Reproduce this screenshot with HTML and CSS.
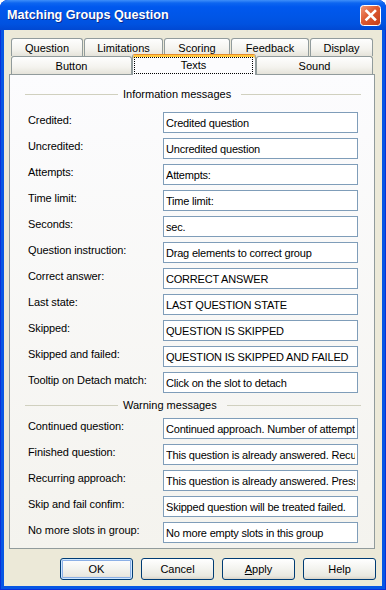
FILE: index.html
```html
<!DOCTYPE html>
<html lang="en">
<head>
  <meta charset="UTF-8">
  <title>Matching Groups Question</title>
  <link rel="stylesheet" href="styles.css">
</head>
<body>
  <div class="window">
    <!-- Title bar -->
    <div class="titlebar">
      <span class="title">Matching Groups Question</span>
      <span class="close">
        <svg width="21" height="21" viewBox="0 0 21 21">
          <defs>
            <linearGradient id="closeFill" x1="0" y1="0" x2="1" y2="1">
              <stop offset="0" stop-color="#f29b7c"/>
              <stop offset="0.45" stop-color="#de5a30"/>
              <stop offset="1" stop-color="#c13c18"/>
            </linearGradient>
          </defs>
          <rect x="0.5" y="0.5" width="20" height="20" rx="3" fill="url(#closeFill)" stroke="#fff"/>
          <path d="M6.5 6 L15 14.5 M15 6 L6.5 14.5" stroke="#fff" stroke-width="2.6" stroke-linecap="square"/>
        </svg>
      </span>
    </div>

    <div class="client">
      <!-- Tabs -->
      <div class="tabs">
        <div class="tab-row">
          <div class="tab t-question">Question</div>
          <div class="tab t-limits">Limitations</div>
          <div class="tab t-scoring">Scoring</div>
          <div class="tab t-feedback">Feedback</div>
          <div class="tab t-display">Display</div>
        </div>
        <div class="tab-row lower">
          <div class="tab t-button">Button</div>
          <div class="tab selected t-texts"><span class="focus">Texts</span></div>
          <div class="tab t-sound">Sound</div>
        </div>
      </div>

      <div class="panel">
        <div class="group-head">
          <span class="line short"></span>
          <span class="caption">Information messages</span>
          <span class="line"></span>
        </div>
        <div class="row"><label>Credited:</label><input type="text" value="Credited question"></div>
        <div class="row"><label>Uncredited:</label><input type="text" value="Uncredited question"></div>
        <div class="row"><label>Attempts:</label><input type="text" value="Attempts:"></div>
        <div class="row"><label>Time limit:</label><input type="text" value="Time limit:"></div>
        <div class="row"><label>Seconds:</label><input type="text" value="sec."></div>
        <div class="row"><label>Question instruction:</label><input type="text" value="Drag elements to correct group"></div>
        <div class="row"><label>Correct answer:</label><input type="text" value="CORRECT ANSWER"></div>
        <div class="row"><label>Last state:</label><input type="text" value="LAST QUESTION STATE"></div>
        <div class="row"><label>Skipped:</label><input type="text" value="QUESTION IS SKIPPED"></div>
        <div class="row"><label>Skipped and failed:</label><input type="text" value="QUESTION IS SKIPPED AND FAILED"></div>
        <div class="row"><label>Tooltip on Detach match:</label><input type="text" value="Click on the slot to detach"></div>

        <div class="group-head second">
          <span class="line short"></span>
          <span class="caption">Warning messages</span>
          <span class="line"></span>
        </div>
        <div class="row"><label>Continued question:</label><input type="text" value="Continued approach. Number of attempts left:"></div>
        <div class="row"><label>Finished question:</label><input type="text" value="This question is already answered. Recurring approach is not allowed."></div>
        <div class="row"><label>Recurring approach:</label><input type="text" value="This question is already answered. Press OK to try again."></div>
        <div class="row"><label>Skip and fail confim:</label><input type="text" value="Skipped question will be treated failed."></div>
        <div class="row"><label>No more slots in group:</label><input type="text" value="No more empty slots in this group"></div>
      </div>

      <div class="buttons">
        <button class="default">OK</button>
        <button>Cancel</button>
        <button><u>A</u>pply</button>
        <button>Help</button>
      </div>
    </div>
  </div>
</body>
</html>
```

FILE: styles.css
```css
body {
  margin: 0;
  background: #fff;
  font-family: "Liberation Sans", Arial, sans-serif;
  font-size: 11px;
  color: #000;
}

.window {
  width: 386px;
  height: 590px;
  display: flex;
  flex-direction: column;
  background: #0756e4;
  border-radius: 8px 8px 0 0;
  box-shadow: inset 0 0 0 1px #0831d9;
}

.titlebar {
  height: 30px;
  flex: none;
  display: flex;
  align-items: center;
  padding: 0 5px 0 7px;
  border-radius: 8px 8px 0 0;
  background: linear-gradient(#3f8ff9 0, #0d66f0 3px, #0058ee 7px, #0056e8 50%, #0052e0 80%, #0148d2 100%);
}

.title {
  flex: 1;
  color: #fff;
  font-weight: bold;
  font-size: 12.6px;
  text-shadow: 1px 1px 0 #0b2a8c;
}

.close {
  width: 21px;
  height: 21px;
  margin-top: 1px;
}

.close svg {
  display: block;
}

.client {
  flex: 1;
  margin: 0 4px 4px;
  padding: 8px 6px 0 5px;
  background: #ece9d8;
  display: flex;
  flex-direction: column;
}

/* Tabs */
.tabs {
  margin-left: 2px;
}

.tab-row {
  display: flex;
  gap: 1px;
  height: 18px;
}

.tab-row.lower {
  gap: 0;
  align-items: flex-end;
}

.tab {
  height: 18px;
  box-sizing: border-box;
  border: 1px solid #919b9c;
  border-bottom: none;
  border-radius: 3px 3px 0 0;
  background: linear-gradient(#fefefe, #f4f3ee 60%, #e5e3da);
  display: flex;
  align-items: center;
  justify-content: center;
  padding-top: 1px;
}

.t-question { width: 72px; }
.t-limits { width: 79px; }
.t-scoring { width: 66px; }
.t-feedback { width: 78px; }
.t-display { width: 63px; }
.t-button { width: 121px; }
.t-texts { width: 124px; }
.t-sound { width: 117px; }

.tab.selected {
  position: relative;
  z-index: 1;
  height: 21px;
  margin-top: -2px;
  margin-bottom: -1px;
  padding: 2px 2px 1px 1px;
  align-items: stretch;
  border-top-color: #e68b2c;
  background: #fcfcfe;
  box-shadow: inset 0 2px 0 #ffc73c;
}

.focus {
  flex: 1;
  border: 1px dotted #000;
  display: flex;
  align-items: center;
  justify-content: center;
  padding-bottom: 2px;
}

/* Panel */
.panel {
  height: 475px;
  box-sizing: border-box;
  margin-right: 1px;
  border: 1px solid #919b9c;
  padding: 12px 15px 0 16px;
  background: linear-gradient(#fcfcfe, #f4f3ee);
}

.group-head {
  display: flex;
  align-items: center;
  height: 14px;
  margin: 0 -2px 11px -1px;
}

.group-head.second {
  margin-top: 1px;
  margin-bottom: 6px;
}

.line {
  flex: 1;
  height: 1px;
  background: #d0d0bf;
}

.line.short {
  flex: none;
  width: 93px;
}

.caption {
  padding: 0 10px 0 5px;
}

.row {
  display: flex;
  height: 21px;
  margin-bottom: 5px;
}

.row label {
  width: 137px;
  box-sizing: border-box;
  padding-left: 2px;
  line-height: 16px;
  letter-spacing: -0.1px;
}

.row input {
  width: 195px;
  height: 21px;
  box-sizing: border-box;
  margin: 0;
  padding: 0 2px;
  border: 1px solid #7f9db9;
  background: #fff;
  font: inherit;
  letter-spacing: -0.2px;
  color: #000;
  outline: none;
}

/* Dialog buttons */
.buttons {
  display: flex;
  justify-content: flex-end;
  gap: 8px;
  margin-top: 9px;
}

button {
  width: 73px;
  height: 22px;
  padding: 0;
  border: 1px solid #003c74;
  border-radius: 3px;
  background: linear-gradient(#ffffff, #f4f4f0 45%, #e9e8e0 85%, #d8d3c8);
  font: inherit;
  color: #000;
}

button.default {
  box-shadow: inset 0 0 0 1px #cee7ff, inset 0 0 0 2px #8cb0e6;
}
```
